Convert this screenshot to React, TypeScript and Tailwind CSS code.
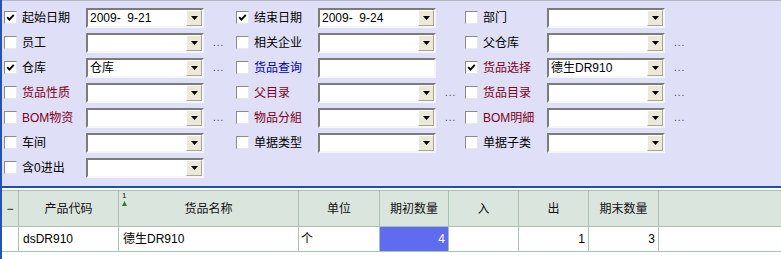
import React from "react";

type Field = {
  label: string;
  checked?: boolean;
  value?: string;
  color?: "red" | "blue";
  dots?: boolean;
  plain?: boolean;
};

const rows: Field[][] = [
  [
    { label: "起始日期", checked: true, value: "2009-  9-21" },
    { label: "结束日期", checked: true, value: "2009-  9-24" },
    { label: "部门" },
  ],
  [
    { label: "员工", dots: true },
    { label: "相关企业" },
    { label: "父仓库", dots: true },
  ],
  [
    { label: "仓库", checked: true, value: "仓库", dots: true },
    { label: "货品查询", color: "blue", plain: true },
    { label: "货品选择", checked: true, value: "德生DR910", color: "red", dots: true },
  ],
  [
    { label: "货品性质", color: "red" },
    { label: "父目录", color: "red", dots: true },
    { label: "货品目录", color: "red", dots: true },
  ],
  [
    { label: "BOM物资", color: "red", dots: true },
    { label: "物品分組", color: "red", dots: true },
    { label: "BOM明細", color: "red", dots: true },
  ],
  [{ label: "车间" }, { label: "单据类型" }, { label: "单据子类" }],
  [{ label: "含0进出" }],
];

const columns = [
  { title: "−", w: "w-[17px]" },
  { title: "产品代码", w: "w-[100px]" },
  { title: "货品名称", w: "w-[180px]", sort: true },
  { title: "单位", w: "w-[81px]" },
  { title: "期初数量", w: "w-[69px]" },
  { title: "入", w: "w-[70px]" },
  { title: "出", w: "w-[70px]" },
  { title: "期末数量", w: "w-[70px]" },
];

const CheckBox = ({ checked }: { checked?: boolean }) => (
  <div className="w-[13px] h-[13px] shrink-0 bg-white border border-t-[#8a8a8a] border-l-[#8a8a8a] border-b-[#e8e8e8] border-r-[#e8e8e8] flex items-center justify-center">
    {checked && (
      <svg width="9" height="9" viewBox="0 0 9 9">
        <polyline points="1.2,4.2 3.4,6.6 7.8,1.8" fill="none" stroke="#000" strokeWidth="1.9" />
      </svg>
    )}
  </div>
);

const Combo = ({ value, plain }: { value?: string; plain?: boolean }) => (
  <div className="w-[118px] h-[20px] shrink-0 flex bg-white border-2 border-t-[#7c7c7c] border-l-[#7c7c7c] border-b-[#f6f6f6] border-r-[#f6f6f6]">
    <div className="flex-1 flex items-center pl-[2px] text-black leading-none whitespace-pre">{value}</div>
    {!plain && (
      <div className="w-[16px] h-full bg-[#ece9d8] border border-t-[#fdfdfb] border-l-[#fdfdfb] border-b-[#a8a598] border-r-[#a8a598] flex items-center justify-center">
        <svg width="7" height="4" viewBox="0 0 7 4">
          <polygon points="0,0 7,0 3.5,4" fill="#000" />
        </svg>
      </div>
    )}
  </div>
);

const FieldCell = ({ f }: { f: Field }) => (
  <div className="flex items-center h-[25px]">
    <CheckBox checked={f.checked} />
    <div
      className={`ml-[5px] w-[64px] shrink-0 ${
        f.color === "red" ? "text-[#800020]" : f.color === "blue" ? "text-[#0000b0]" : "text-black"
      }`}
    >
      {f.label}
    </div>
    <Combo value={f.value} plain={f.plain} />
    {f.dots && <div className="ml-[9px] text-[#444] text-[10px] tracking-[1px]">...</div>}
  </div>
);

export default function App() {
  return (
    <div
      className="w-[781px] h-[259px] overflow-hidden flex flex-col bg-white border-l-2 border-[#2452b8] text-[12px]"
      style={{ fontFamily: '"Liberation Sans", "Noto Sans CJK SC", sans-serif' }}
    >
      {/* filter form */}
      <div className="h-[186px] shrink-0 bg-[#dfdff7] border-t border-[#b4b4c4] pt-[4px] pl-[2px]">
        {rows.map((r, i) => (
          <div key={i} className="grid grid-cols-[232px_229px_1fr]">
            {r.map((f) => (
              <FieldCell key={f.label} f={f} />
            ))}
          </div>
        ))}
      </div>
      <div className="h-[2px] shrink-0 bg-[#1f4fa6]" />

      {/* grid */}
      <div className="mt-[2px]">
        <div className="flex h-[37px] bg-[#dae6dd] border-y border-[#a9c1b0]">
          {columns.map((c, i) => (
            <div
              key={i}
              className={`${c.w} shrink-0 relative flex items-center justify-center border-r border-[#a9c1b0] text-[#111]`}
            >
              {c.sort && (
                <div className="absolute left-[3px] top-[1px] flex flex-col items-start leading-none">
                  <span className="text-[8px]">1</span>
                  <svg width="5" height="5" viewBox="0 0 5 5" className="mt-[1px]">
                    <polygon points="2.5,0 5,5 0,5" fill="#2e7d32" />
                  </svg>
                </div>
              )}
              {c.title}
            </div>
          ))}
        </div>
        <div className="flex h-[25px] border-b border-[#a9c1b0]">
          <div className="w-[17px] shrink-0 border-r border-[#a9c1b0] bg-white" />
          <div className="w-[100px] shrink-0 border-r border-[#a9c1b0] flex items-center pl-[4px]">dsDR910</div>
          <div className="w-[180px] shrink-0 border-r border-[#a9c1b0] flex items-center pl-[4px]">德生DR910</div>
          <div className="w-[81px] shrink-0 border-r border-[#a9c1b0] flex items-center pl-[2px]">个</div>
          <div className="w-[69px] shrink-0 border-r border-[#a9c1b0] flex items-center justify-end pr-[3px] bg-[#5f6cf0] text-white">4</div>
          <div className="w-[70px] shrink-0 border-r border-[#a9c1b0]" />
          <div className="w-[70px] shrink-0 border-r border-[#a9c1b0] flex items-center justify-end pr-[3px]">1</div>
          <div className="w-[70px] shrink-0 border-r border-[#a9c1b0] flex items-center justify-end pr-[3px]">3</div>
        </div>
      </div>
    </div>
  );
}
